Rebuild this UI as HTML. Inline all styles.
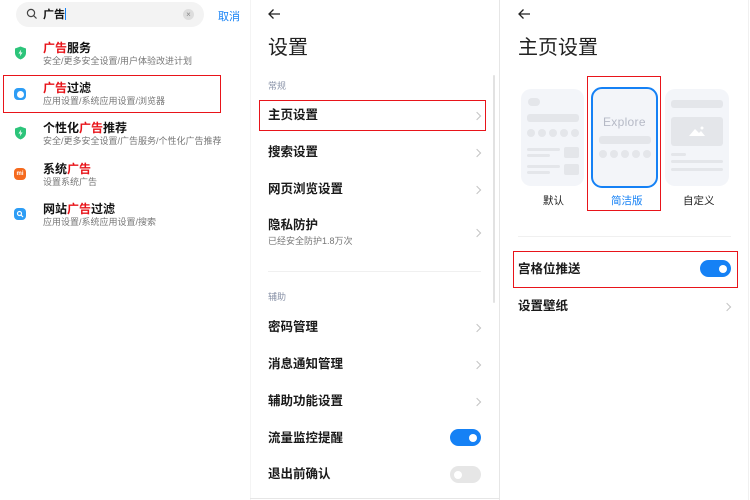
<!DOCTYPE html>
<html><head><meta charset="utf-8"><style>
*{margin:0;padding:0;box-sizing:border-box}
body{width:750px;height:500px;background:#fff;position:relative;overflow:hidden;font-family:"Liberation Sans","Noto Sans CJK SC",sans-serif;color:#111}
.a{position:absolute;white-space:nowrap}
.t{font-size:12px;font-weight:bold;color:#111;line-height:14px}
.s{font-size:9px;color:#777;line-height:11px}
.r{color:#e8141a}
.row{font-size:12.5px;font-weight:bold;color:#1a1a1a;line-height:14px}
.chev{position:absolute;width:6px;height:6px;border-right:1px solid #c4c4c4;border-top:1px solid #c4c4c4;transform:rotate(45deg)}
.tog{position:absolute;width:31px;height:17px;border-radius:9px;background:#1581f5}
.tog::after{content:"";position:absolute;right:4px;top:4.5px;width:8px;height:8px;border-radius:50%;background:#fff}
.tog.off{background:#e6e6e6}
.tog.off::after{left:4px;right:auto}
.box{position:absolute;border:1.2px solid #e8141a}
.card{position:absolute;background:#f3f5f9;border-radius:10px}
.g{position:absolute;background:#e4e6ea;border-radius:2px}
.d{position:absolute;width:10px;height:10px;border-radius:50%;background:#e4e6ea}
.ic{position:absolute;width:11px;height:11px;border-radius:3px}
</style></head><body>
<!-- left panel -->
<div class="a" style="left:16px;top:2px;width:188px;height:25px;border-radius:13px;background:#f3f3f3"></div>
<svg class="a" style="left:26px;top:8px" width="12" height="12" viewBox="0 0 12 12"><circle cx="5" cy="5" r="3.6" fill="none" stroke="#444" stroke-width="1.2"/><path d="M7.7 7.7L10.5 10.5" stroke="#444" stroke-width="1.2"/></svg>
<div class="a t" style="left:43px;top:8px;font-size:11px">广告<span style="display:inline-block;width:1px;height:12px;background:#1581f5;vertical-align:-2px"></span></div>
<div class="a" style="left:183px;top:9px;width:11px;height:11px;border-radius:50%;background:#ddd;color:#888;font-size:8px;line-height:11px;text-align:center">×</div>
<div class="a" style="left:218px;top:8px;font-size:11px;color:#1581f5">取消</div>

<svg class="a" style="left:14px;top:46px" width="13" height="14" viewBox="0 0 13 14"><path d="M6.5 0.5L12 2.5V7C12 10 9.5 12.5 6.5 13.5C3.5 12.5 1 10 1 7V2.5Z" fill="#2cc47a"/><path d="M7.2 3.5L4.5 7.5H6.5L5.8 10.5L8.5 6.5H6.5Z" fill="#fff"/></svg>
<div class="a t" style="left:43px;top:41px"><span class="r">广告</span>服务</div>
<div class="a s" style="left:43px;top:56px">安全/更多安全设置/用户体验改进计划</div>

<div class="box" style="left:3px;top:75px;width:218px;height:38px"></div>
<div class="ic" style="left:14px;top:88px;width:12px;height:12px;border-radius:4px;background:#2d9df5"></div>
<div class="ic" style="left:16.5px;top:90.5px;width:7px;height:7px;border-radius:50%;background:#fff"></div>
<div class="a t" style="left:43px;top:81px"><span class="r">广告</span>过滤</div>
<div class="a s" style="left:43px;top:96px">应用设置/系统应用设置/浏览器</div>

<svg class="a" style="left:14px;top:126px" width="13" height="14" viewBox="0 0 13 14"><path d="M6.5 0.5L12 2.5V7C12 10 9.5 12.5 6.5 13.5C3.5 12.5 1 10 1 7V2.5Z" fill="#2cc47a"/><path d="M7.2 3.5L4.5 7.5H6.5L5.8 10.5L8.5 6.5H6.5Z" fill="#fff"/></svg>
<div class="a t" style="left:43px;top:121px">个性化<span class="r">广告</span>推荐</div>
<div class="a s" style="left:43px;top:136px">安全/更多安全设置/广告服务/个性化广告推荐</div>

<div class="ic" style="left:14px;top:168px;width:12px;height:12px;border-radius:4px;background:#f56a1e;color:#fff;font-size:6px;line-height:12px;text-align:center;font-weight:bold">mi</div>
<div class="a t" style="left:43px;top:162px">系统<span class="r">广告</span></div>
<div class="a s" style="left:43px;top:177px">设置系统广告</div>

<div class="ic" style="left:14px;top:208px;width:12px;height:12px;border-radius:4px;background:#2d9df5"></div>
<svg class="a" style="left:16px;top:210px" width="8" height="8" viewBox="0 0 8 8"><circle cx="3.5" cy="3.5" r="2" fill="none" stroke="#fff" stroke-width="1.2"/><path d="M5 5L7 7" stroke="#fff" stroke-width="1.2"/></svg>
<div class="a t" style="left:43px;top:202px">网站<span class="r">广告</span>过滤</div>
<div class="a s" style="left:43px;top:217px">应用设置/系统应用设置/搜索</div>

<!-- middle panel -->
<div class="a" style="left:250px;top:0;width:1px;height:500px;background:#f4f4f4"></div>
<div class="a" style="left:499px;top:0;width:1px;height:500px;background:#e6e6e6"></div>
<div class="a" style="left:250px;top:498px;width:250px;height:1px;background:#e6e6e6"></div>
<div class="a" style="left:493px;top:75px;width:2px;height:228px;background:#e2e2e2;border-radius:1px"></div>
<svg class="a" style="left:267px;top:8px" width="14" height="12" viewBox="0 0 14 12"><path d="M13 6H2M6.5 1.5L2 6L6.5 10.5" fill="none" stroke="#222" stroke-width="1.3"/></svg>
<div class="a" style="left:268px;top:36px;font-size:20px;color:#222;line-height:24px">设置</div>
<div class="a s" style="left:268px;top:81px;color:#8a93a8">常规</div>
<div class="box" style="left:259px;top:100px;width:227px;height:31px"></div>
<div class="a row" style="left:268px;top:108px">主页设置</div><div class="chev" style="left:474px;top:113px"></div>
<div class="a row" style="left:268px;top:145px">搜索设置</div><div class="chev" style="left:474px;top:150px"></div>
<div class="a row" style="left:268px;top:182px">网页浏览设置</div><div class="chev" style="left:474px;top:187px"></div>
<div class="a row" style="left:268px;top:218px">隐私防护</div>
<div class="a s" style="left:268px;top:236px">已经安全防护1.8万次</div><div class="chev" style="left:474px;top:230px"></div>
<div class="a" style="left:268px;top:271px;width:213px;height:1px;background:#f0f0f0"></div>
<div class="a s" style="left:268px;top:292px;color:#8a93a8">辅助</div>
<div class="a row" style="left:268px;top:320px">密码管理</div><div class="chev" style="left:474px;top:325px"></div>
<div class="a row" style="left:268px;top:357px">消息通知管理</div><div class="chev" style="left:474px;top:362px"></div>
<div class="a row" style="left:268px;top:394px">辅助功能设置</div><div class="chev" style="left:474px;top:399px"></div>
<div class="a row" style="left:268px;top:431px">流量监控提醒</div><div class="tog" style="left:450px;top:429px"></div>
<div class="a row" style="left:268px;top:467px">退出前确认</div><div class="tog off" style="left:450px;top:466px"></div>

<!-- right panel -->
<svg class="a" style="left:517px;top:8px" width="14" height="12" viewBox="0 0 14 12"><path d="M13 6H2M6.5 1.5L2 6L6.5 10.5" fill="none" stroke="#222" stroke-width="1.3"/></svg>
<div class="a" style="left:518px;top:36px;font-size:20px;color:#222;line-height:24px">主页设置</div>

<div class="card" style="left:521px;top:89px;width:63px;height:97px"></div>
<div class="a" style="left:528px;top:98px;width:12px;height:8px;border-radius:5px;background:#e4e6ea"></div>
<div class="g" style="left:527px;top:114px;width:52px;height:8px;border-radius:3px"></div>
<div class="d" style="left:527px;top:129px;width:8px;height:8px"></div><div class="d" style="left:538px;top:129px;width:8px;height:8px"></div><div class="d" style="left:549px;top:129px;width:8px;height:8px"></div><div class="d" style="left:560px;top:129px;width:8px;height:8px"></div><div class="d" style="left:571px;top:129px;width:8px;height:8px"></div>
<div class="g" style="left:527px;top:148px;width:33px;height:3px"></div><div class="g" style="left:527px;top:154px;width:23px;height:3px"></div><div class="g" style="left:564px;top:147px;width:15px;height:11px"></div>
<div class="g" style="left:527px;top:165px;width:33px;height:3px"></div><div class="g" style="left:527px;top:171px;width:23px;height:3px"></div><div class="g" style="left:564px;top:164px;width:15px;height:11px"></div>

<div class="a" style="left:591px;top:87px;width:67px;height:101px;border:2px solid #1581f5;border-radius:11px;background:#f3f5f9"></div>
<div class="a" style="left:603px;top:115px;font-size:12px;color:#b6bac6;letter-spacing:0.3px">Explore</div>
<div class="g" style="left:599px;top:136px;width:52px;height:8px;border-radius:3px"></div>
<div class="d" style="left:599px;top:150px;width:8px;height:8px"></div><div class="d" style="left:610px;top:150px;width:8px;height:8px"></div><div class="d" style="left:621px;top:150px;width:8px;height:8px"></div><div class="d" style="left:632px;top:150px;width:8px;height:8px"></div><div class="d" style="left:643px;top:150px;width:8px;height:8px"></div>
<div class="box" style="left:587px;top:76px;width:74px;height:135px"></div>

<div class="card" style="left:665px;top:89px;width:64px;height:97px"></div>
<div class="g" style="left:671px;top:100px;width:52px;height:8px;border-radius:3px"></div>
<div class="g" style="left:671px;top:117px;width:52px;height:29px;border-radius:3px"></div>
<svg class="a" style="left:688px;top:125px" width="18" height="12" viewBox="0 0 18 12"><path d="M1 11L7 4L11 8L13 6L17 11Z" fill="#fff"/><circle cx="14" cy="3" r="1.5" fill="#fff"/></svg>
<div class="g" style="left:671px;top:153px;width:15px;height:3px"></div>
<div class="g" style="left:671px;top:160px;width:52px;height:3px"></div>
<div class="g" style="left:671px;top:168px;width:52px;height:3px"></div>

<div class="a" style="left:543px;top:193px;font-size:10.5px;color:#222">默认</div>
<div class="a" style="left:611px;top:193px;font-size:10.5px;color:#1581f5">简洁版</div>
<div class="a" style="left:683px;top:193px;font-size:10.5px;color:#222">自定义</div>
<div class="a" style="left:518px;top:236px;width:213px;height:1px;background:#f0f0f0"></div>
<div class="box" style="left:513px;top:251px;width:225px;height:37px"></div>
<div class="a row" style="left:518px;top:262px">宫格位推送</div><div class="tog" style="left:700px;top:260px"></div>
<div class="a row" style="left:518px;top:299px">设置壁纸</div><div class="chev" style="left:724px;top:304px"></div>
<div class="a" style="left:748px;top:0;width:1px;height:500px;background:#f0f0f0"></div>
</body></html>
